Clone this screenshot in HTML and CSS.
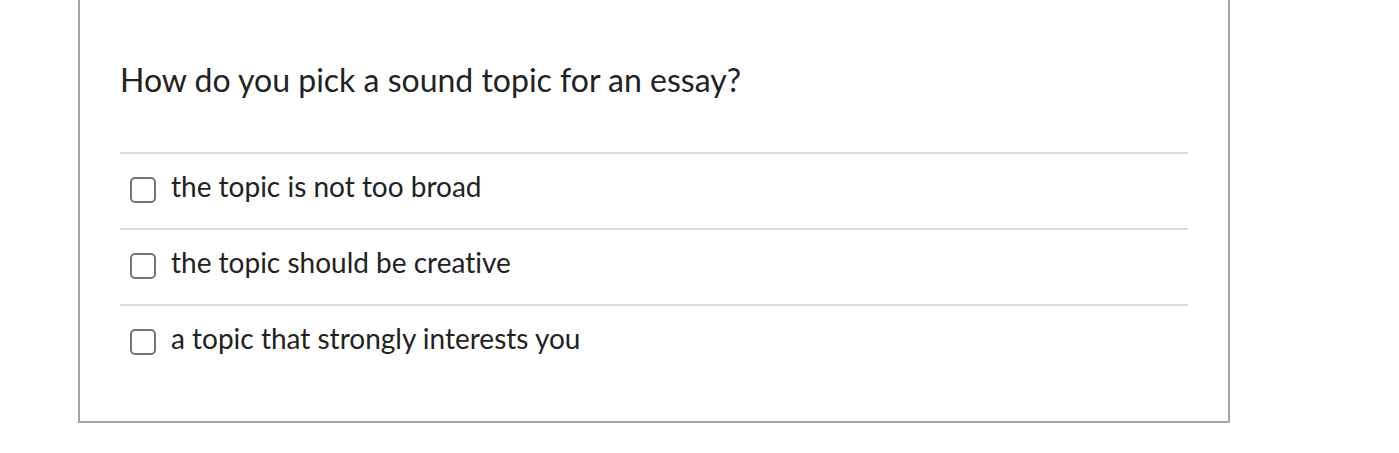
FILE: index.html
```html
<!DOCTYPE html>
<html>
<head>
<meta charset="utf-8">
<link rel="stylesheet" href="styles.css">
</head>
<body>
<div class="quiz">
  <div class="question">How do you pick a sound topic for an essay?</div>
  <div class="answers">
    <label class="answer"><span class="box"></span><span class="text">the topic is not too broad</span></label>
    <label class="answer"><span class="box"></span><span class="text">the topic should be creative</span></label>
    <label class="answer"><span class="box"></span><span class="text">a topic that strongly interests you</span></label>
  </div>
</div>
</body>
</html>
```
FILE: styles.css
```css
html, body {
  margin: 0;
  padding: 0;
  background: #fff;
}
body {
  font-family: Lato, "Noto Sans", sans-serif;
  color: #222;
  font-variant-ligatures: none;
}
.quiz {
  margin-left: 78px;
  border: 2px solid #a5a5a5;
  border-top: none;
  padding: 58px 40px 41px 40px;
  box-sizing: content-box;
  width: 1068px;
}
.question {
  font-size: 32px;
  line-height: 44px;
  margin-bottom: 50px;
}
.answers {
  display: flex;
  flex-direction: column;
}
.answer {
  display: flex;
  align-items: center;
  gap: 15px;
  height: 74px;
  border-top: 2px solid #dadada;
  padding-left: 10px;
  font-size: 28px;
}
.box {
  width: 22px;
  height: 22px;
  border: 2px solid #747474;
  border-radius: 5px;
  flex: none;
  margin-top: -2px;
}
.text {
  margin-top: -10px;
}
```
